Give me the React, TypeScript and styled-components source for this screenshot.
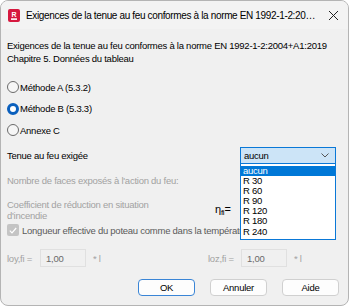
import React from 'react'
import styled, { createGlobalStyle } from 'styled-components'

const GlobalStyle = createGlobalStyle`
  html, body {
    margin: 0;
    padding: 0;
    background: #ffffff;
  }
  body {
    font-family: 'Liberation Sans', Arial, sans-serif;
    font-size: 9.5px;
    letter-spacing: -0.25px;
    color: #000;
  }
`

const Window = styled.div`
  box-sizing: border-box;
  width: 349px;
  height: 306px;
  background: #f0f0f0;
  border: 1px solid #b4b4b4;
  border-radius: 8px;
  overflow: hidden;
  display: flex;
  flex-direction: column;
`

const TitleBar = styled.div`
  height: 28px;
  display: flex;
  align-items: center;
  padding: 0 0 0 7px;
  background: #f3f3f3;
`

const TitleText = styled.div`
  flex: 1;
  margin-left: 6px;
  font-size: 10px;
  letter-spacing: -0.35px;
  white-space: nowrap;
  overflow: hidden;
  text-overflow: ellipsis;
`

const CloseBox = styled.div`
  width: 26px;
  margin-right: 2px;
  display: flex;
  justify-content: center;
  align-items: center;
`

const Body = styled.div`
  flex: 1;
  display: flex;
  flex-direction: column;
  padding: 9.5px 6px 0 6px;
`

const Intro = styled.div`
  line-height: 13px;
  white-space: nowrap;
`

const RadioGroup = styled.div`
  display: flex;
  flex-direction: column;
  gap: 8.5px;
  margin-top: 16px;
`

const RadioRow = styled.label`
  display: flex;
  align-items: center;
  height: 13px;
  gap: 1px;
`

const RadioDot = styled.span<{ checked?: boolean }>`
  box-sizing: border-box;
  width: 12px;
  height: 12px;
  border-radius: 50%;
  background: ${({ checked }) => (checked ? '#ffffff' : '#f6f6f6')};
  border: ${({ checked }) => (checked ? '3px solid #0a5fbd' : '1px solid #6a6a6a')};
`

const FieldRow = styled.div`
  display: flex;
  align-items: center;
  justify-content: space-between;
  height: 17px;
  margin-top: 10px;
`

const ComboWrap = styled.div`
  position: relative;
  width: 96px;
  margin-right: 6px;
`

const Combo = styled.div`
  box-sizing: border-box;
  height: 17px;
  border: 1px solid #0a78d7;
  background: #cce4f7;
  display: flex;
  align-items: center;
  justify-content: space-between;
  padding: 0 6px 0 3px;
`

const List = styled.div`
  position: absolute;
  top: 16px;
  left: 0;
  z-index: 5;
  box-sizing: border-box;
  width: 96px;
  background: #ffffff;
  border: 1px solid #0a78d7;
  padding: 2px 0 2px;
`

const ListItem = styled.div<{ selected?: boolean }>`
  height: 10.2px;
  line-height: 10.2px;
  padding-left: 2px;
  background: ${({ selected }) => (selected ? '#0078d7' : 'transparent')};
  color: ${({ selected }) => (selected ? '#ffffff' : '#000')};
`

const Muted = styled.div`
  color: #a2a2a2;
  line-height: 13px;
`

const FacesText = styled(Muted)`
  margin-top: 10px;
`

const CoeffRow = styled.div`
  display: flex;
  align-items: center;
  margin-top: 12px;
`

const CoeffText = styled(Muted)`
  width: 208px;
  line-height: 11px;
`

const Eta = styled.span`
  font-size: 11px;
  sub {
    font-size: 8px;
    vertical-align: -2px;
  }
`

const CheckRow = styled.div`
  display: flex;
  align-items: center;
  gap: 3px;
  height: 13px;
  margin-top: 3px;
  white-space: nowrap;
  color: #5a5a5a;
`

const CheckBox = styled.span`
  width: 12px;
  height: 12px;
  border-radius: 2px;
  background: #c4c4c4;
  display: flex;
  align-items: center;
  justify-content: center;
  flex: none;
`

const FactorRow = styled.div`
  display: flex;
  align-items: center;
  margin-top: 12.5px;
`

const FactorGroup = styled.div<{ grow?: boolean }>`
  display: flex;
  align-items: center;
  flex: ${({ grow }) => (grow ? 1 : 'none')};
`

const FactorLabel = styled(Muted)`
  width: 33px;
`

const FactorInput = styled.div`
  box-sizing: border-box;
  width: 46px;
  height: 18px;
  border: 1px solid #e0e0e0;
  background: #f0f0f0;
  color: #6a6a6a;
  display: flex;
  align-items: center;
  padding-left: 5px;
`

const Unit = styled(Muted)`
  margin-left: 7px;
`

const ButtonBar = styled.div`
  display: flex;
  justify-content: flex-end;
  gap: 15px;
  margin-top: 12px;
  padding-right: 3px;
`

const Button = styled.div<{ primary?: boolean }>`
  box-sizing: border-box;
  width: 57px;
  height: 17px;
  border-radius: 4px;
  background: #fdfdfd;
  border: ${({ primary }) => (primary ? '1.5px solid #3a85d6' : '1px solid #d0d0d0')};
  display: flex;
  align-items: center;
  justify-content: center;
`

const AppIcon = () => (
  <svg width="12" height="13" viewBox="0 0 12 13">
    <rect x="0" y="0" width="12" height="13" rx="2" fill="#d6193f" />
    <text x="6" y="7.5" fontSize="7" fontWeight="bold" fill="#fff" textAnchor="middle" fontFamily="Liberation Sans, sans-serif">R</text>
    <rect x="3" y="9.3" width="6" height="1.6" fill="#fff" />
  </svg>
)

const levels = ['aucun', 'R 30', 'R 60', 'R 90', 'R 120', 'R 180', 'R 240']

export default function App() {
  return (
    <>
      <GlobalStyle />
      <Window>
        <TitleBar>
          <AppIcon />
          <TitleText>Exigences de la tenue au feu conformes à la norme EN 1992-1-2:2004+A1:2019</TitleText>
          <CloseBox>
            <svg width="11" height="11" viewBox="0 0 11 11">
              <path d="M1 1 L10 10 M10 1 L1 10" stroke="#222" strokeWidth="1" />
            </svg>
          </CloseBox>
        </TitleBar>
        <Body>
          <Intro>
            Exigences de la tenue au feu conformes à la norme EN 1992-1-2:2004+A1:2019
            <br />
            Chapitre 5. Données du tableau
          </Intro>
          <RadioGroup>
            <RadioRow>
              <RadioDot />
              Méthode A (5.3.2)
            </RadioRow>
            <RadioRow>
              <RadioDot checked />
              Méthode B (5.3.3)
            </RadioRow>
            <RadioRow>
              <RadioDot />
              Annexe C
            </RadioRow>
          </RadioGroup>
          <FieldRow>
            <span>Tenue au feu exigée</span>
            <ComboWrap>
              <Combo>
                <span>aucun</span>
                <svg width="8" height="5" viewBox="0 0 8 5">
                  <path d="M0.5 0.5 L4 4 L7.5 0.5" stroke="#555" strokeWidth="1" fill="none" />
                </svg>
              </Combo>
              <List>
                {levels.map((l, i) => (
                  <ListItem key={l} selected={i === 0}>
                    {l}
                  </ListItem>
                ))}
              </List>
            </ComboWrap>
          </FieldRow>
          <FacesText>Nombre de faces exposés à l'action du feu:</FacesText>
          <CoeffRow>
            <CoeffText>
              Coefficient de réduction en situation
              <br />
              d'incendie
            </CoeffText>
            <Eta>
              η<sub>fi</sub>=
            </Eta>
          </CoeffRow>
          <CheckRow>
            <CheckBox>
              <svg width="8" height="7" viewBox="0 0 8 7">
                <path d="M0.8 3.6 L3 5.8 L7.2 1" stroke="#fff" strokeWidth="1.2" fill="none" />
              </svg>
            </CheckBox>
            Longueur effective du poteau comme dans la température
          </CheckRow>
          <FactorRow>
            <FactorGroup grow>
              <FactorLabel>loy,fi =</FactorLabel>
              <FactorInput>1,00</FactorInput>
              <Unit>* l</Unit>
            </FactorGroup>
            <FactorGroup style={{ width: 134 }}>
              <FactorLabel>loz,fi =</FactorLabel>
              <FactorInput>1,00</FactorInput>
              <Unit>* l</Unit>
            </FactorGroup>
          </FactorRow>
          <ButtonBar>
            <Button primary>OK</Button>
            <Button>Annuler</Button>
            <Button>Aide</Button>
          </ButtonBar>
        </Body>
      </Window>
    </>
  )
}
